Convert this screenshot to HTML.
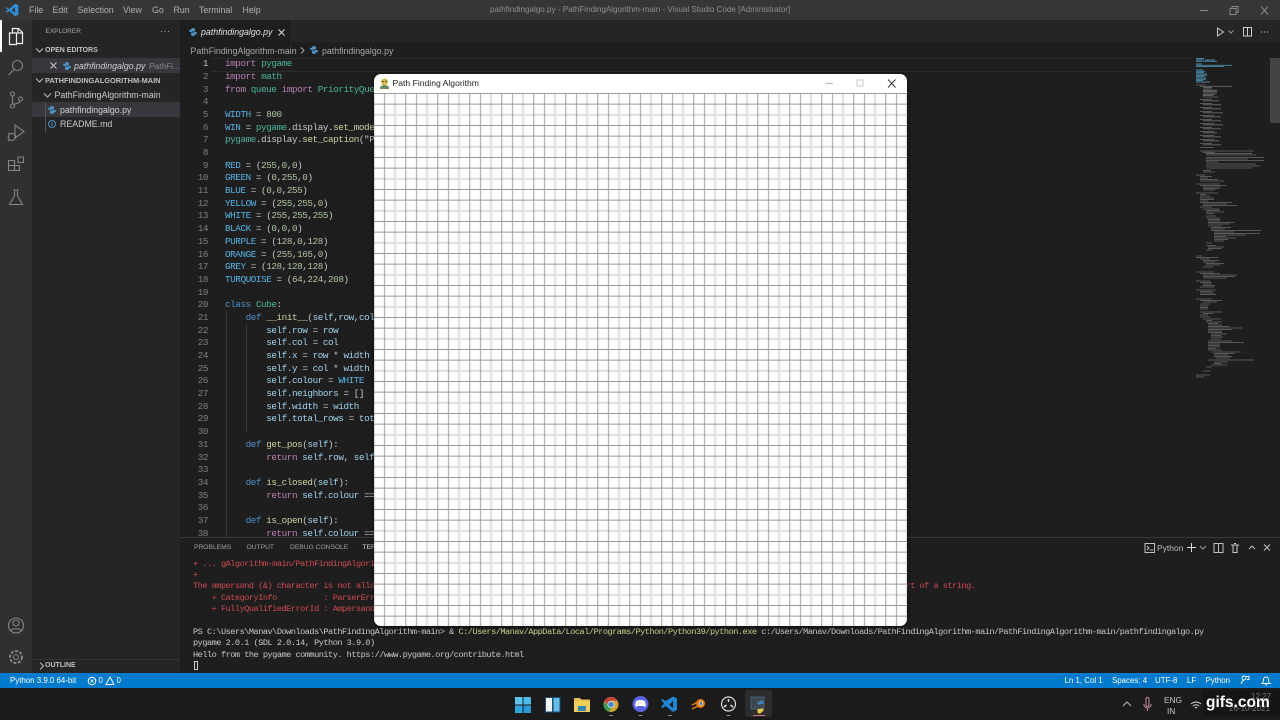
<!DOCTYPE html>
<html><head><meta charset="utf-8"><title>VS Code</title>
<style>
html,body{margin:0;padding:0;width:1280px;height:720px;overflow:hidden;background:#1e1e1e}
#r{position:relative;width:1280px;height:720px;overflow:hidden;font-family:"Liberation Sans",sans-serif;font-size:8.8px;color:#ccc;filter:blur(.3px)}
.b{position:absolute}
.t{position:absolute;white-space:nowrap;line-height:14px;height:14px}
pre{margin:0;position:absolute;font-family:"Liberation Mono",monospace;white-space:pre}
#code{left:225px;top:58.2px;font-size:9.3px;line-height:12.68px;letter-spacing:-.43px;color:#c8c8c8}
#nums{left:190px;top:58.2px;width:18px;text-align:right;font-size:9.3px;line-height:12.68px;letter-spacing:-.43px;color:#7f7f7f}
#term{left:193px;top:558.5px;font-size:8.6px;line-height:11.38px;letter-spacing:-.5px;color:#c8c8c8}
.k{color:#b97fb4}.m{color:#4ab59f}.c{color:#56b4e6}.n{color:#adc4a0}.d{color:#4f8fc6}.f{color:#d0d0a2}.s{color:#a3d3ef}.e{color:#cc4a52}.y{color:#d0d08c}
.h{font-weight:bold;color:#c0c0c0}
svg{position:absolute;overflow:visible}
.ic{fill:none;stroke:#8f8f8f;stroke-width:1.1}
.w{color:#fff;font-size:7.9px}
.p{font-size:6.7px;color:#a0a0a0;top:541px}
</style></head><body><div id="r">
<!-- backgrounds -->
<div class="b" style="left:0;top:0;width:1280px;height:20px;background:#363636"></div>
<div class="b" style="left:0;top:20px;width:32px;height:653px;background:#303030"></div>
<div class="b" style="left:32px;top:20px;width:148px;height:653px;background:#252526"></div>
<div class="b" style="left:180px;top:20px;width:1100px;height:22px;background:#252526"></div>
<div class="b" style="left:180px;top:20px;width:110px;height:22px;background:#1e1e1e"></div>
<div class="b" style="left:0;top:20px;width:1.5px;height:32px;background:#fff"></div>
<div class="b" style="left:32px;top:58px;width:148px;height:15px;background:#37373d"></div>
<div class="b" style="left:32px;top:102px;width:148px;height:15px;background:#37373d"></div>
<div class="b" style="left:45px;top:102px;width:1px;height:30px;background:#555"></div>
<div class="b" style="left:32px;top:659px;width:148px;height:1px;background:#333"></div>
<div class="b" style="left:212px;top:58px;width:980px;height:12px;border-top:1px solid #2c2c2c;border-bottom:1px solid #2c2c2c"></div>
<div class="b" style="left:246px;top:324px;width:1px;height:108px;background:#3a3a3a"></div>
<div class="b" style="left:225.5px;top:311px;width:1px;height:226px;background:#3a3a3a"></div>
<div class="b" style="left:1270px;top:58px;width:10px;height:65px;background:#444"></div>
<!-- top menu -->
<svg style="left:5px;top:3px" width="14" height="14" viewBox="0 0 14 14"><path d="M10 .8 L13.4 2.2V11.8L10 13.2 4.2 8 1.8 9.8 .6 9 3 7 .6 5 1.8 4.2 4.2 6Z M10 4 6.6 7 10 10Z" fill="#2f8fd8" fill-rule="evenodd"/></svg>
<span class="t" style="left:29px;top:3px;color:#b0b0b0">File</span>
<span class="t" style="left:52.5px;top:3px;color:#b0b0b0">Edit</span>
<span class="t" style="left:77.5px;top:3px;color:#b0b0b0">Selection</span>
<span class="t" style="left:123px;top:3px;color:#b0b0b0">View</span>
<span class="t" style="left:152px;top:3px;color:#b0b0b0">Go</span>
<span class="t" style="left:173.5px;top:3px;color:#b0b0b0">Run</span>
<span class="t" style="left:199px;top:3px;color:#b0b0b0">Terminal</span>
<span class="t" style="left:242.5px;top:3px;color:#b0b0b0">Help</span>
<span class="t" style="left:490px;top:3px;color:#8f8f8f;font-size:8.08px">pathfindingalgo.py - PathFindingAlgorithm-main - Visual Studio Code [Administrator]</span>
<svg style="left:1200px;top:6px" width="70" height="10"><path d="M0 4.5h8" stroke="#888" fill="none"/><path d="M30 2.5h6v6h-6z M32 2.5v-2h6v6h-2" stroke="#888" fill="none"/><path d="M61 .5l7 8m0-8l-7 8" stroke="#888" fill="none"/></svg>
<!-- activity icons -->
<svg style="left:0;top:20px" width="32" height="660" viewBox="0 0 32 660">
<g fill="none" stroke="#f0f0f0" stroke-width="1.2"><path d="M12.5 13.5V8.5h6l4 4v11h-6 M9.5 13h7v11.500h-7z M18 8.500v4.500h4.500"/></g>
<g class="ic" style="stroke:#858585"><circle cx="17.500" cy="45.500" r="5"/><path d="M14 49.500l-5.500 5.500"/>
<circle cx="12.500" cy="74" r="2"/><circle cx="12.500" cy="86" r="2"/><circle cx="20.500" cy="79" r="2"/><path d="M12.500 76v8M20.500 81c0 2-5 2.500-7 3.500"/>
<path d="M15 105v13l9-6.500z"/><circle cx="12" cy="117" r="3.500"/><path d="M8 113l2 1.500M8 121l2-1.500M7.500 117h1"/>
<path d="M8.500 140.500h6v5h5v5h-11zM14.500 145.500h-6M14.500 145.500v5M18 137h5.500v5.500H18z"/>
<path d="M13.500 170h5M14.500 170v6l-5 8.500h13l-5-8.500v-6"/>
<circle cx="16" cy="605.500" r="7.500"/><circle cx="16" cy="603" r="3"/><path d="M10.500 611c1.500-3 9.500-3 11 0"/>
<circle cx="16" cy="637" r="2.500"/><circle cx="16" cy="637" r="6" stroke-dasharray="3 1.500" stroke-width="2"/></g></svg>
<!-- sidebar -->
<span class="t" style="left:45.500px;top:25px;font-size:6.5px;color:#aaa">EXPLORER</span>
<span class="t" style="left:160px;top:24px;font-size:9px;color:#bbb;letter-spacing:.5px">···</span>
<svg style="left:35px;top:46px" width="20" height="130"><path d="M1 2.500l3.500 3.500 3.500-3.500M1 32.500l3.500 3.500 3.500-3.500M9 47.500l3.500 3.500 3.500-3.500" fill="none" stroke="#bbb"/></svg>
<span class="t h" style="left:45px;top:43.500px;font-size:7px">OPEN EDITORS</span>
<svg style="left:50px;top:62px" width="8" height="8"><path d="M.5.500l6 6m0-6l-6 6" stroke="#ccc" fill="none"/></svg>
<span class="t" style="left:74px;top:59px;font-style:italic;color:#d0d0d0">pathfindingalgo.py</span>
<span class="t" style="left:149px;top:59px;font-style:italic;color:#8a8a8a;font-size:8.300px">PathFi...</span>
<span class="t h" style="left:45px;top:73.500px;font-size:7.4px">PATHFINDINGALGORITHM-MAIN</span>
<span class="t" style="left:54.500px;top:88px">PathFindingAlgorithm-main</span>
<span class="t" style="left:60px;top:103px;color:#d0d0d0">pathfindingalgo.py</span>
<span class="t" style="left:60px;top:117px">README.md</span>
<svg style="left:48px;top:120px" width="8" height="8"><circle cx="4" cy="4" r="3.500" fill="none" stroke="#4a90c0"/><path d="M4 2.500v3.500" stroke="#4a90c0"/></svg>
<svg style="left:39px;top:662px" width="6" height="8"><path d="M1 .500l3.500 3.500-3.500 3.500" fill="none" stroke="#bbb"/></svg>
<span class="t h" style="left:45px;top:659px;font-size:7px">OUTLINE</span>
<!-- python icons -->
<svg style="left:189px;top:28px" width="8" height="8" viewBox="0 0 8 8"><path id="py" d="M2 1.500Q2 0 4 0t2 1.500V3.500H3V4H1Q0 4 0 2.800T1 1.800H2zM6 6.500Q6 8 4 8T2 6.500V4.500H5V4H7Q8 4 8 5.200T7 6.200H6z" fill="#4a90c0"/></svg>
<svg style="left:62.500px;top:61.500px" width="8" height="8" viewBox="0 0 8 8"><use href="#py"/></svg>
<svg style="left:48px;top:105.500px" width="8" height="8" viewBox="0 0 8 8"><use href="#py"/></svg>
<svg style="left:310px;top:46px" width="8" height="8" viewBox="0 0 8 8"><use href="#py"/></svg>
<!-- tabs -->
<span class="t" style="left:201px;top:25px;font-style:italic;color:#e0e0e0">pathfindingalgo.py</span>
<svg style="left:277.500px;top:28.500px" width="8" height="8"><path d="M.5.500l6 6m0-6l-6 6" stroke="#ddd" fill="none"/></svg>
<span class="t" style="left:190.500px;top:43.500px;color:#a8a8a8">PathFindingAlgorithm-main</span>
<svg style="left:300px;top:47px" width="5" height="7"><path d="M1 .500l3 3-3 3" stroke="#aaa" fill="none"/></svg>
<span class="t" style="left:322px;top:43.500px;color:#a8a8a8">pathfindingalgo.py</span>
<svg style="left:1215px;top:27px" width="58" height="10"><path d="M2.500 1v8l6-4z" fill="none" stroke="#ccc"/><path d="M13.500 3.500l2.500 2.500 2.500-2.500" fill="none" stroke="#999"/><path d="M28.500.500h8v8.500h-8zM32.500.500v8.500" fill="none" stroke="#ccc"/><path d="M46 5h1M49 5h1M52 5h1" stroke="#ccc"/></svg>
<!-- code -->
<pre id="nums"><span style="color:#c6c6c6">1</span>
2
3
4
5
6
7
8
9
10
11
12
13
14
15
16
17
18
19
20
21
22
23
24
25
26
27
28
29
30
31
32
33
34
35
36
37
38</pre>
<pre id="code"><span class="k">import</span> <span class="m">pygame</span>
<span class="k">import</span> <span class="m">math</span>
<span class="k">from</span> <span class="m">queue</span> <span class="k">import</span> <span class="m">PriorityQueue</span>

<span class="c">WIDTH</span> = <span class="n">800</span>
<span class="c">WIN</span> = <span class="m">pygame</span>.display.<span class="f">set_mode</span>((WIDTH,WIDTH))
<span class="m">pygame</span>.display.<span class="f">set_caption</span>("Path Finding Algorithm")

<span class="c">RED</span> = (<span class="n">255</span>,<span class="n">0</span>,<span class="n">0</span>)
<span class="c">GREEN</span> = (<span class="n">0</span>,<span class="n">255</span>,<span class="n">0</span>)
<span class="c">BLUE</span> = (<span class="n">0</span>,<span class="n">0</span>,<span class="n">255</span>)
<span class="c">YELLOW</span> = (<span class="n">255</span>,<span class="n">255</span>,<span class="n">0</span>)
<span class="c">WHITE</span> = (<span class="n">255</span>,<span class="n">255</span>,<span class="n">255</span>)
<span class="c">BLACK</span> = (<span class="n">0</span>,<span class="n">0</span>,<span class="n">0</span>)
<span class="c">PURPLE</span> = (<span class="n">128</span>,<span class="n">0</span>,<span class="n">128</span>)
<span class="c">ORANGE</span> = (<span class="n">255</span>,<span class="n">165</span>,<span class="n">0</span>)
<span class="c">GREY</span> = (<span class="n">128</span>,<span class="n">128</span>,<span class="n">128</span>)
<span class="c">TURQUOISE</span> = (<span class="n">64</span>,<span class="n">224</span>,<span class="n">208</span>)

<span class="d">class</span> <span class="m">Cube</span>:
    <span class="d">def</span> <span class="f">__init__</span>(<span class="s">self</span>,<span class="s">row</span>,<span class="s">col</span>,<span class="s">width</span>,<span class="s">total_rows</span>):
        <span class="s">self</span>.<span class="s">row</span> = <span class="s">row</span>
        <span class="s">self</span>.<span class="s">col</span> = <span class="s">col</span>
        <span class="s">self</span>.<span class="s">x</span> = <span class="s">row</span> * <span class="s">width</span>
        <span class="s">self</span>.<span class="s">y</span> = <span class="s">col</span> * <span class="s">width</span>
        <span class="s">self</span>.<span class="s">colour</span> = <span class="c">WHITE</span>
        <span class="s">self</span>.<span class="s">neighbors</span> = []
        <span class="s">self</span>.<span class="s">width</span> = <span class="s">width</span>
        <span class="s">self</span>.<span class="s">total_rows</span> = <span class="s">total_rows</span>

    <span class="d">def</span> <span class="f">get_pos</span>(<span class="s">self</span>):
        <span class="k">return</span> <span class="s">self</span>.<span class="s">row</span>, <span class="s">self</span>.<span class="s">col</span>

    <span class="d">def</span> <span class="f">is_closed</span>(<span class="s">self</span>):
        <span class="k">return</span> <span class="s">self</span>.<span class="s">colour</span> == <span class="c">RED</span>

    <span class="d">def</span> <span class="f">is_open</span>(<span class="s">self</span>):
        <span class="k">return</span> <span class="s">self</span>.<span class="s">colour</span> == <span class="c">GREEN</span></pre>
<!-- minimap -->
<svg style="left:0;top:0" width="1280" height="400">
<path d="M1196 58.500h8M1196 60h8m1 0h10M1196 61.300h6m1 0h14M1196 64h6M1196 65.300h36M1196 66.600h28M1196 70h7M1196 71.300h9M1196 72.600h8M1196 74h11M1196 75.300h11M1196 76.600h8M1196 78h10M1196 79.300h10M1196 80.600h7M1196 82h14" stroke="#4b8ba8" stroke-width=".9" fill="none"/>
<path d="M1196 85h9M1200 86.300h32M1203 87.600h9M1203 89h9M1203 90.300h14M1203 91.600h14M1203 93h14M1203 94.300h12M1203 95.600h10M1203 97h15M1200 99.500h12M1203 100.800h16M1200 103.500h12M1203 104.800h18M1200 107.500h12M1203 108.800h18M1200 111.500h12M1203 112.800h20M1200 115.500h14M1203 116.800h18M1200 119.500h12M1203 120.800h18M1200 123.500h14M1203 124.800h20M1200 127.500h12M1203 128.800h18M1200 131.500h14M1203 132.800h14M1200 135.500h14M1203 136.800h18M1200 139.500h14M1203 140.800h16M1200 143.500h12M1203 144.800h18M1200 147.500h14M1200 151h54M1203 152.300h12M1206 153.600h46M1206 155h50M1206 157.500h58M1206 159h42M1206 160.500h58M1206 162h12M1206 164h50M1206 166h54M1206 168h46M1203 170.500h8M1203 172h12M1196 175h9M1200 176.500h12M1200 178h8M1200 179.500h18M1200 181h24M1196 184h24M1200 185.500h26M1203 187h18M1203 188.500h16M1203 190h12M1196 193h22M1200 194.500h6M1200 196h10M1200 198h14M1200 199.500h14M1200 201h8M1200 202.500h32M1203 204h24M1203 205.500h34M1200 207h12M1203 209h16M1206 210.500h14M1206 212h18M1206 213.500h8M1206 216h10M1206 218h14M1208 219.500h12M1208 221h12M1208 222.500h26M1208 224h22M1208 226h14M1211 227.500h20M1211 229h14M1211 230.500h50M1214 232h20M1214 233.500h46M1214 235h32M1214 236.500h12M1214 238h22M1214 239.500h14M1214 241h10M1206 243h6M1206 245.500h10M1208 247h16M1208 248.500h14M1206 250h6M1196 256h6M1196 257.500h22M1200 259h10M1203 260.500h16M1203 262h12M1206 263.500h18M1206 265h14M1203 267h10M1196 272h18M1200 273.500h20M1203 275h34M1203 276.500h32M1203 278h24M1196 281h14M1200 282.500h12M1203 284h8M1203 285.500h12M1200 287h14M1196 290h20M1200 291.500h12M1200 293h14M1200 294.500h16M1196 299h16M1200 300.500h22M1203 302h14M1200 304h10M1200 306h8M1200 307.500h8M1200 309h8M1200 312h22M1203 313.500h10M1200 315h8M1200 317h10M1203 319h18M1206 320.500h6M1206 322h16M1208 323.500h10M1208 325h14M1208 326.500h22M1208 328h34M1208 329.500h24M1208 331h14M1208 332.500h14M1211 334h16M1211 335.500h10M1211 337h12M1211 339h10M1208 341h24M1208 342.500h36M1208 344h12M1208 345.500h12M1208 347h12M1208 348.500h8M1208 350h14M1211 352h30M1214 353.500h20M1214 355h14M1214 356.500h18M1216 358h14M1208 360h46M1214 362h14M1214 363.500h8M1211 365h16M1206 367h6M1203 371h8M1196 375h14M1196 377h8" stroke="#7d7d7d" stroke-width=".85" fill="none" opacity=".8"/>
</svg>
<!-- panel -->
<div class="b" style="left:180px;top:537px;width:1100px;height:136px;background:#1e1e1e;border-top:1px solid #3a3a3a;box-sizing:border-box"></div>
<span class="t p" style="left:194px">PROBLEMS</span>
<span class="t p" style="left:246.500px">OUTPUT</span>
<span class="t p" style="left:290px">DEBUG CONSOLE</span>
<span class="t p" style="left:362.500px;color:#ddd">TERMINAL</span>
<svg style="left:1144px;top:542px" width="130" height="12"><g fill="none" stroke="#c0c0c0"><path d="M1 1.500h9.500v9h-9.500zM3 4l2 2-2 2M6 8h3"/><path d="M43 5.500h9M47.500 1v9" stroke="#ddd"/><path d="M56 4l3 3 3-3" stroke="#999"/><path d="M70 1.500h9v9h-9zM74.500 1.500v9"/><path d="M87 3h8M89 3v7.500h4V3M90 1.500h2" stroke="#ccc"/><path d="M105 7l3-3 3 3"/><path d="M120 2.500l6 6m0-6l-6 6"/></g></svg>
<span class="t" style="left:1157px;top:541px;color:#bbb;font-size:8.500px">Python</span>
<pre id="term"><span class="e">+ ... gAlgorithm-main/PathFindingAlgorithm-main/pathfindingalgo.py
+
The ampersand (&amp;) character is not allowed. The &amp; operator is reserved for future use; wrap an ampersand in double quotation marks ("&amp;") to pass it as part of a string.
    + CategoryInfo          : ParserError: (:) [], ParentContainsErrorRecordException
    + FullyQualifiedErrorId : AmpersandNotAllowed</span>

PS C:\Users\Manav\Downloads\PathFindingAlgorithm-main&gt; &amp; <span class="y">C:/Users/Manav/AppData/Local/Programs/Python/Python39/python.exe</span> c:/Users/Manav/Downloads/PathFindingAlgorithm-main/PathFindingAlgorithm-main/pathfindingalgo.py
pygame 2.0.1 (SDL 2.0.14, Python 3.9.0)
Hello from the pygame community. https://www.pygame.org/contribute.html</pre>
<div class="b" style="left:193.500px;top:661px;width:4px;height:9px;border:1px solid #ccc;box-sizing:border-box"></div>
<!-- pygame window -->
<div class="b" style="left:374px;top:74px;width:532.5px;height:552px;background:#fff;border-radius:7px;overflow:hidden;box-shadow:0 0 6px rgba(0,0,0,.5)">
<svg style="left:0;top:19px" width="533" height="533">
<defs><pattern id="g" x="-.7" y="0" width="32" height="32" patternUnits="userSpaceOnUse">
<path d="M21.830 0v32M0 21.830h32" stroke="#e2e2e2" stroke-width="2.400" fill="none"/>
<path d="M.5 0v32M11.170 0v32M0 .5h32M0 11.170h32" stroke="#9a9a9a" stroke-width="1" fill="none"/>
</pattern></defs>
<rect width="533" height="533" fill="url(#g)"/></svg>
<span class="t" style="left:18.500px;top:2px;color:#222;font-size:8.600px">Path Finding Algorithm</span>
<svg style="left:5px;top:4px" width="11" height="11" viewBox="0 0 11 11"><circle cx="5.500" cy="4" r="3.500" fill="#d9c04a"/><path d="M1 9q4.500-4 9 0v2H1z" fill="#6d8a5a"/><circle cx="4" cy="3.500" r=".8" fill="#333"/><circle cx="7" cy="3.500" r=".8" fill="#333"/></svg>
<svg style="left:450px;top:3px" width="80" height="13"><path d="M2 6.500h7" stroke="#bbb" stroke-width="1.200"/><path d="M33 3h6v6h-6z" stroke="#ccc" fill="none"/><path d="M64 2.500l7.500 8m0-8l-7.500 8" stroke="#333" fill="none"/></svg>
</div>
<!-- status bar -->
<div class="b" style="left:0;top:673px;width:1280px;height:15px;background:#007acc"></div>
<span class="t w" style="left:10px;top:674px">Python 3.9.0 64-bit</span>
<svg style="left:87px;top:676px" width="30" height="10"><circle cx="5" cy="5" r="3.800" fill="none" stroke="#fff"/><path d="M3.500 3.500l3 3m0-3l-3 3" stroke="#fff" stroke-width=".8"/><path d="M23 1l4 7.500h-8z" fill="none" stroke="#fff"/></svg>
<span class="t w" style="left:98.500px;top:674px">0</span>
<span class="t w" style="left:116.500px;top:674px">0</span>
<span class="t w" style="left:1064.500px;top:674px">Ln 1, Col 1</span>
<span class="t w" style="left:1112px;top:674px">Spaces: 4</span>
<span class="t w" style="left:1155px;top:674px">UTF-8</span>
<span class="t w" style="left:1187px;top:674px">LF</span>
<span class="t w" style="left:1205.500px;top:674px">Python</span>
<svg style="left:1240px;top:675px" width="32" height="11"><g fill="none" stroke="#fff" stroke-width=".9"><circle cx="4" cy="3" r="2"/><path d="M1 9q1-3.500 3-3.500M6 1.500h3v3H7"/><path d="M22 8.500q1.500-1 1.500-4a2.500 2.500 0 0 1 5 0q0 3 1.500 4zM25 9.800h2"/></g></svg>
<!-- taskbar -->
<div class="b" style="left:0;top:688px;width:1280px;height:32px;background:#1b1b1b"></div>
<div class="b" style="left:745px;top:690px;width:27px;height:27px;background:#2d2d2d;border-radius:3px"></div>
<svg style="left:510px;top:692px" width="262" height="26" viewBox="510 692 262 26">
<g fill="#3fb4ea"><rect x="515" y="697" width="7.500" height="7.500" fill="#5cc8f2"/><rect x="523.500" y="697" width="7.500" height="7.500" fill="#4bbcec"/><rect x="515" y="705.500" width="7.500" height="7.500" fill="#2fa6e0"/><rect x="523.500" y="705.500" width="7.500" height="7.500" fill="#2899d4"/></g>
<rect x="545" y="697" width="15.500" height="15.500" rx="1" fill="#1d4f78"/><rect x="546" y="698" width="6" height="13.500" fill="#f2f2f2"/><rect x="553.500" y="698" width="6" height="13.500" fill="#60bdec"/>
<path d="M574 698h6l1.500 1.500h8.500v4h-16z" fill="#e8c04c"/><rect x="574" y="701" width="16" height="11" fill="#f3cf5a"/><rect x="578" y="706" width="8" height="5" fill="#3188b8"/>
<circle cx="611" cy="704.500" r="7.500" fill="#d4a52e"/><path d="M611 697a7.500 7.500 0 0 1 6.500 3.700h-6.500l-4 3.500-2.500-3A7.500 7.500 0 0 1 611 697z" fill="#c8443c"/><path d="M603.800 702a7.500 7.500 0 0 0 5 9.700l3-4z" fill="#3f9b50"/><circle cx="611" cy="704.500" r="3.200" fill="#3f86d8" stroke="#eee" stroke-width=".8"/>
<circle cx="640.500" cy="704" r="8" fill="#5b63e0"/><path d="M636 701q4.500-2 9 0l1 5-2 1-.7-1h-5.600l-.7 1-2-1z" fill="#fff"/>
<path d="M673 696.500l4 2v11.500l-4 2-7.500-6-3 2-1.500-1 3-3.500-3-3.500 1.500-1 3 2zM673 701l-3.500 3.500 3.500 3.500z" fill="#1f85d0" fill-rule="evenodd"/>
<circle cx="700.500" cy="703.500" r="4.500" fill="#e87d0d"/><path d="M692 705l6-3M692 709l8-4" stroke="#e87d0d" stroke-width="1.500"/><circle cx="701" cy="703.500" r="1.800" fill="#3c7ab5" stroke="#eee" stroke-width=".7"/>
<circle cx="728.500" cy="704" r="7" fill="#222" stroke="#d8d8d8" stroke-width="1.200"/><path d="M728.500 699v3M724 707l2.500-2M733 707l-2.500-2" stroke="#ddd" stroke-width="1.500"/>
<rect x="751" y="697" width="13" height="12" fill="#3c4650" stroke="#5a7d9a" stroke-width=".6"/><path d="M759.500 702q0-1.500 2-1.500t2 1.500v2h-3v.5h-2q-1 0-1-1.500t1-1.500z" fill="#3f86c0"/><path d="M761.500 712q0 1.500-2 1.500t-2-1.500v-3h3v-.5h2q1 0 1 1.500t-1 1.500z" fill="#e8c94a"/>
<path d="M609 715.500h4M638.500 715.500h4M668 715.500h4M726.500 715.500h4" stroke="#888"/><path d="M753 715.500h12" stroke="#c87080"/>
</svg>
<svg style="left:1120px;top:698px" width="82" height="14"><path d="M3 8l4-4 4 4" stroke="#bbb" fill="none"/><path d="M26 1a1.500 1.500 0 0 1 3 0v6a1.500 1.500 0 0 1-3 0z M23.800 6q.5 4 3.700 4t3.700-4M27.500 10v3" stroke="#c88a9a" fill="none"/><path d="M71 6q5-4 10 0M73 8q3-2.500 6 0M75 10q1-1 2 0" stroke="#ddd" fill="none"/></svg>
<span class="t" style="left:1164px;top:692.500px;color:#c8c8c8;font-size:8.300px">ENG</span>
<span class="t" style="left:1167px;top:703.500px;color:#c8c8c8;font-size:8.300px">IN</span>
<div class="b" style="left:1203px;top:690px;width:77px;height:26px;background:#151515"></div>
<span class="t" style="left:1251px;top:689.500px;color:#777;font-size:8px">12:27</span>
<span class="t" style="left:1229px;top:702px;color:#777;font-size:8px">26-10-2021</span>
<span class="t" style="left:1206px;top:693.500px;color:#fff;font-size:15.500px;font-weight:bold;line-height:17px;height:17px">gifs.com</span>
</div></body></html>
